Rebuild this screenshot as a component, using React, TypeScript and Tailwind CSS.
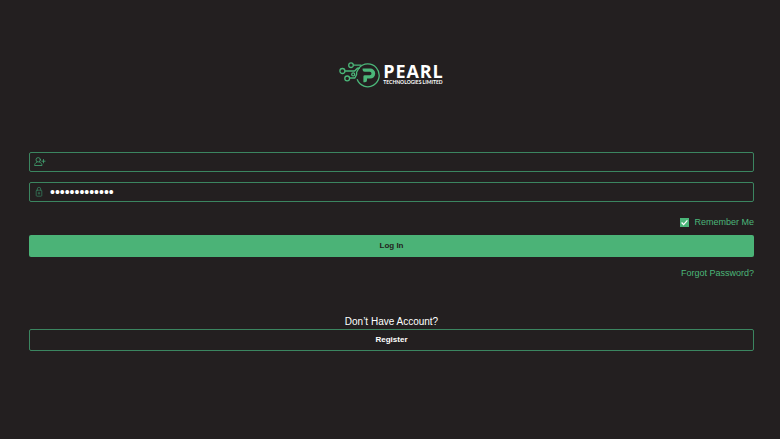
import type { ReactNode } from "react";

interface FieldProps {
  id: string;
  type?: "text" | "password";
  value?: string;
  icon: ReactNode;
}

function Field({ id, type = "text", value, icon }: FieldProps) {
  return (
    <div className="flex h-5 items-center rounded-xs border border-[#3b8560] pl-1 focus-within:border-[#4bb679]">
      <label htmlFor={id} className="flex w-4 shrink-0 items-center">
        {icon}
      </label>
      <input
        id={id}
        type={type}
        defaultValue={value}
        className="h-full min-w-0 flex-1 bg-transparent text-[14px] text-white outline-none"
      />
    </div>
  );
}

function UserIcon() {
  return (
    <svg role="img" aria-label="Username" className="h-3 w-3" viewBox="0 0 12 12" fill="none" stroke="#43a773" strokeWidth="0.8" strokeLinecap="round" strokeLinejoin="round">
      <circle cx="4.2" cy="3.8" r="2.2" />
      <path d="M3 6C1.4 6.8 0.6 8 0.6 9.5h7.4C8 8 7.2 6.8 5.4 6" />
      <path d="M9.5 3.5v3.4M7.9 5.2h3.2" />
    </svg>
  );
}

function LockIcon() {
  return (
    <svg role="img" aria-label="Password" className="h-3 w-3" viewBox="0 0 12 12" fill="none" stroke="#35795a" strokeWidth="0.8" strokeLinecap="round" strokeLinejoin="round">
      <rect x="2.2" y="4.2" width="5.6" height="6" rx="0.8" />
      <path d="M3.3 4.2V3a1.7 1.7 0 0 1 3.4 0v1.2M5 6.2v2M4.2 7.2h1.6" />
    </svg>
  );
}

function Logo() {
  return (
    <div className="flex items-center gap-0.5">
      <svg className="h-[26px] w-[42px]" viewBox="0 0 42 26" fill="none" stroke="#4bb679" strokeWidth="1.3">
        {/* ring with the circuit lines running into it */}
        <path d="M19.9 6.2A11.4 11.4 0 1 1 18.1 17.3" />
        <path d="M14 3.2H22.5M6 9H15.6L18.4 6.2H21M10 16h5.8l1.8-3.4V10.2l2.3-4" />
        <circle cx="12" cy="3.2" r="2.3" fill="#231f20" />
        <circle cx="3.4" cy="9" r="2.5" fill="#231f20" />
        <circle cx="14.2" cy="12.4" r="1.5" fill="#231f20" />
        <circle cx="8.2" cy="16.4" r="2.4" fill="#231f20" />
        {/* mark */}
        <path
          d="M23.6 6.6h7.6a5 5 0 0 1 0 10h-3.2v1.6a2 2 0 0 1-2 2H24.4v-5.6a1.4 1.4 0 0 1 1.4-1.4h5a1.7 1.7 0 0 0 0-3.4H25.6A2 2 0 0 1 23.6 7.8Z"
          fill="#4bb679"
          stroke="none"
        />
      </svg>
      <div className="flex flex-col pb-0.5 font-bold text-white">
        <span className="font-['Open_Sans',sans-serif] text-lg leading-4 tracking-wider">PEARL</span>
        <span className="font-[Lato,sans-serif] text-[5px] leading-[6px]">TECHNOLOGIES LIMITED</span>
      </div>
    </div>
  );
}

function App() {
  return (
    <div className="min-h-screen bg-[#231f20] pl-[29px] pr-[26px] pt-[62px] font-['Liberation_Sans',Arial,sans-serif]">
      <div className="flex justify-center">
        <Logo />
      </div>

      <form className="mt-16 flex flex-col" onSubmit={(e) => e.preventDefault()}>
        <div className="flex flex-col gap-[10px]">
          <Field id="username" icon={<UserIcon />} />
          <Field id="password" type="password" value="pearltech2023" icon={<LockIcon />} />
        </div>

        <label htmlFor="remember" className="mt-[15px] flex items-center gap-[5px] self-end text-[9px] leading-[10px] text-[#4bb679]">
          <span className="grid">
            <input
              id="remember"
              type="checkbox"
              defaultChecked
              className="peer col-start-1 row-start-1 h-[9px] w-[9px] appearance-none border border-[#4bb679] checked:bg-[#4bb679]"
            />
            <svg
              className="pointer-events-none invisible col-start-1 row-start-1 h-[9px] w-[9px] peer-checked:visible"
              viewBox="0 0 9 9"
              fill="none"
              stroke="white"
              strokeWidth="1.3"
            >
              <path d="M1.6 4.5l2 2.1 3.8-4.2" />
            </svg>
          </span>
          Remember Me
        </label>

        <button type="submit" className="mt-2 h-[22px] rounded-xs bg-[#4bb377] text-[8px] font-bold text-[#231f20]">
          Log In
        </button>
        <a href="#forgot" className="mt-[11px] self-end text-[9px] leading-[10px] text-[#4bb679] hover:underline">
          Forgot Password?
        </a>
      </form>

      <div className="mt-9 flex flex-col">
        <p className="text-center text-[10px] leading-[15px] text-white">Don’t Have Account?</p>
        <button type="button" className="h-[22px] rounded-xs border border-[#3b8560] text-[8px] font-bold text-white">
          Register
        </button>
      </div>
    </div>
  );
}

export default App;
